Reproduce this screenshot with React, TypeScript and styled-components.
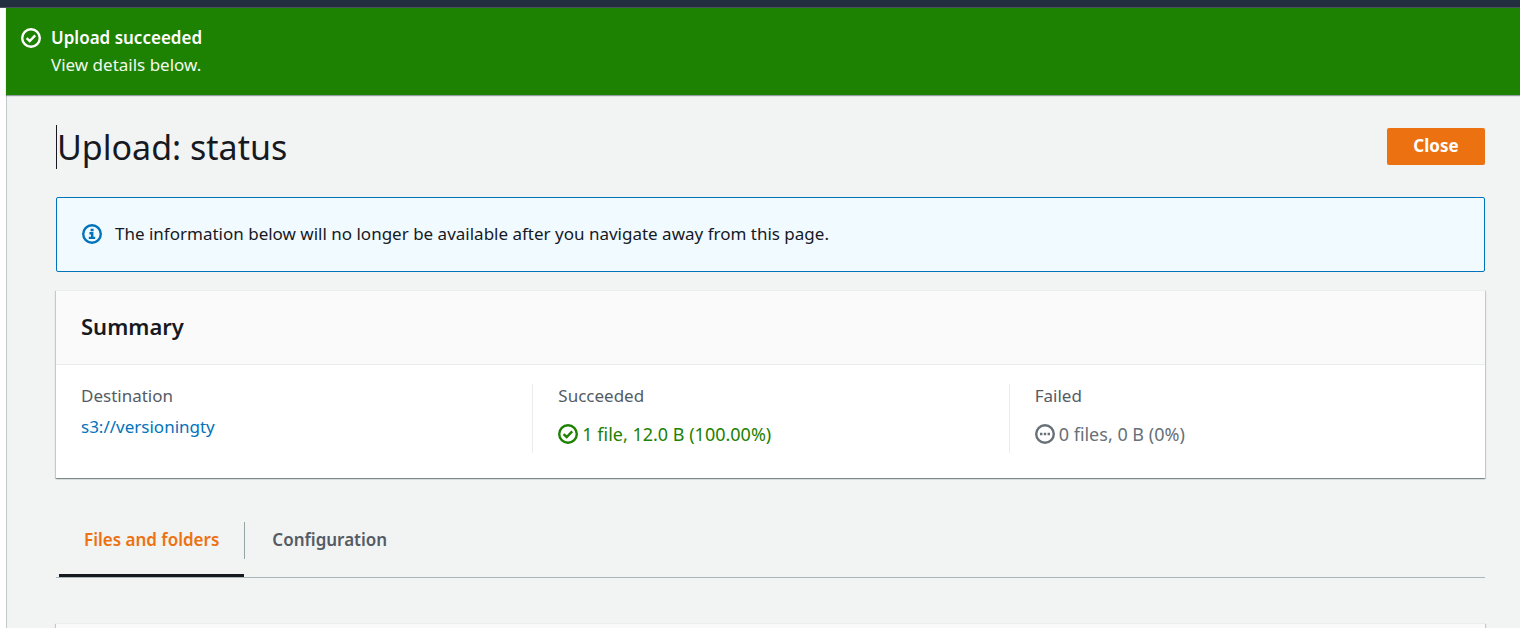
import React from "react";
import styled, { createGlobalStyle, css } from "styled-components";

const GlobalStyle = createGlobalStyle`
  * { box-sizing: border-box; }
  body {
    margin: 0;
    background: #ffffff;
    color: #16191f;
    font-family: "Noto Sans", "Open Sans", sans-serif;
    font-size: 17px;
    line-height: 24px;
  }
  h1, h2, p, dl, dt, dd { margin: 0; }
  button { font-family: inherit; cursor: pointer; }
`;

const Shell = styled.div`
  display: flex;
  flex-direction: column;
  min-height: 100vh;
`;

const TopBar = styled.header`
  height: 8px;
  background: #232f3e;
  border-bottom: 1px solid #4a5260;
`;

const Page = styled.div`
  flex: 1;
  display: flex;
  flex-direction: column;
  margin-left: 6px;
  background: #f2f3f3;
`;

const Flash = styled.section`
  position: relative;
  display: flex;
  gap: 10px;
  padding: 16px 15px 17px;
  background: #1d8102;
  color: #ffffff;
  box-shadow: 0 1px 1px 0 rgba(0, 28, 36, 0.4);
`;

const FlashIcon = styled.span`
  display: flex;
  align-items: center;
  height: 28px;
`;

const FlashTitle = styled.h2`
  font-size: 17px;
  line-height: 28px;
  font-weight: 600;
`;

const FlashText = styled.p`
  color: #f1faee;
  line-height: 26px;
`;

const Main = styled.main`
  flex: 1;
  display: flex;
  flex-direction: column;
  padding: 30px 35px 0 49px;
  border-left: 1px solid #c3c8cb;
`;

const TitleRow = styled.div`
  display: flex;
  align-items: center;
  justify-content: space-between;
  margin-bottom: 28px;
`;

const Title = styled.h1`
  border-left: 1px solid #16191f;
  font-size: 34px;
  line-height: 44px;
  font-weight: 400;
`;

const CloseButton = styled.button`
  min-width: 98px;
  height: 37px;
  margin-bottom: 2px;
  padding: 0 25px 2px;
  border: 0;
  border-radius: 2px;
  background: #ec7211;
  color: #ffffff;
  font-size: 17px;
  font-weight: 700;
`;

const Notice = styled.div`
  display: flex;
  align-items: center;
  gap: 13px;
  padding: 24px 25px 25px;
  margin-bottom: 18px;
  border: 1px solid #0073bb;
  border-radius: 2px;
  background: #f1faff;
`;

const Card = styled.section<{ $fill?: boolean }>`
  border-top: 1px solid #eaeded;
  background: #ffffff;
  box-shadow: 0 1px 1px 0 rgba(0, 28, 36, 0.3), 1px 1px 1px 0 rgba(0, 28, 36, 0.15),
    -1px 1px 1px 0 rgba(0, 28, 36, 0.15);
  ${(p) =>
    p.$fill &&
    css`
      flex: 1;
      background: #fafafa;
    `}
`;

const CardHeader = styled.div`
  padding: 20px 25px 23px;
  border-bottom: 1px solid #eaeded;
  background: #fafafa;
`;

const CardTitle = styled.h2`
  font-size: 22px;
  line-height: 30px;
  font-weight: 600;
`;

const Columns = styled.dl`
  display: grid;
  grid-template-columns: repeat(3, 1fr);
  padding: 19px 0 25px;
`;

const Column = styled.div`
  min-height: 69px;
  padding: 0 25px;
  & + & {
    border-left: 1px solid #eaeded;
  }
`;

const Label = styled.dt`
  color: #545b64;
`;

const Value = styled.dd`
  padding-top: 7px;
`;

const Status = styled.dd<{ $tone: string }>`
  display: flex;
  align-items: center;
  gap: 4px;
  padding-top: 14px;
  color: ${(p) => p.$tone};
  font-size: 18px;
`;

const Link = styled.a`
  color: #0073bb;
  text-decoration: none;
`;

const TabList = styled.div`
  display: flex;
  margin: 44px 0 45px;
  padding-left: 3px;
  border-bottom: 1px solid #aab7b8;
`;

const Tab = styled.button<{ $active?: boolean }>`
  display: flex;
  padding: 0 0 16px;
  border: 0;
  border-bottom: 3px solid ${(p) => (p.$active ? "#16191f" : "transparent")};
  background: none;
  color: ${(p) => (p.$active ? "#ec7211" : "#545b64")};
  font-size: 17px;
  font-weight: 600;
`;

const TabDivider = styled.span`
  width: 1px;
  height: 37px;
  margin-right: 2px;
  background: #95a5a6;
`;

const TabLabel = styled.span`
  padding: 0 25px;
  line-height: 36px;
`;

const Glyph = styled.svg`
  display: block;
  flex: none;
  width: 20px;
  height: 20px;
  fill: none;
  stroke: currentColor;
`;

const NoticeGlyph = styled(Glyph)`
  color: #0073bb;
`;

function CheckIcon() {
  return (
    <Glyph viewBox="0 0 20 20" strokeWidth="2.4" aria-hidden="true">
      <circle cx="10" cy="10" r="8.8" />
      <path d="M5.6 10.1 8.7 13 14.2 7.3" />
    </Glyph>
  );
}

function InfoIcon() {
  return (
    <NoticeGlyph viewBox="0 0 20 20" strokeWidth="2.4" aria-hidden="true">
      <circle cx="10" cy="10" r="8.8" />
      <path d="M8.6 6h3M7.4 9.3h2.8v4.9M6.8 13.9h6.4" strokeWidth="2.4" />
    </NoticeGlyph>
  );
}

function PendingIcon() {
  return (
    <Glyph viewBox="0 0 20 20" strokeWidth="2.4" aria-hidden="true">
      <circle cx="10" cy="10" r="8.8" />
      <path d="M5 10h2.4M8.8 10h2.4M12.6 10h2.4" />
    </Glyph>
  );
}

export default function App() {
  return (
    <Shell>
      <GlobalStyle />
      <TopBar />
      <Page>
        <Flash role="status">
          <FlashIcon>
            <CheckIcon />
          </FlashIcon>
          <div>
            <FlashTitle>Upload succeeded</FlashTitle>
            <FlashText>View details below.</FlashText>
          </div>
        </Flash>
        <Main>
          <TitleRow>
            <Title>Upload: status</Title>
            <CloseButton type="button">Close</CloseButton>
          </TitleRow>
          <Notice>
            <InfoIcon />
            <p>The information below will no longer be available after you navigate away from this page.</p>
          </Notice>
          <Card>
            <CardHeader>
              <CardTitle>Summary</CardTitle>
            </CardHeader>
            <Columns>
              <Column>
                <Label>Destination</Label>
                <Value>
                  <Link href="#destination">s3://versioningty</Link>
                </Value>
              </Column>
              <Column>
                <Label>Succeeded</Label>
                <Status $tone="#1d8102">
                  <CheckIcon />
                  1 file, 12.0 B (100.00%)
                </Status>
              </Column>
              <Column>
                <Label>Failed</Label>
                <Status $tone="#687078">
                  <PendingIcon />
                  0 files, 0 B (0%)
                </Status>
              </Column>
            </Columns>
          </Card>
          <TabList role="tablist">
            <Tab type="button" role="tab" aria-selected="true" $active>
              <TabLabel>Files and folders</TabLabel>
            </Tab>
            <TabDivider />
            <Tab type="button" role="tab" aria-selected="false">
              <TabLabel>Configuration</TabLabel>
            </Tab>
          </TabList>
          <Card $fill />
        </Main>
      </Page>
    </Shell>
  );
}
